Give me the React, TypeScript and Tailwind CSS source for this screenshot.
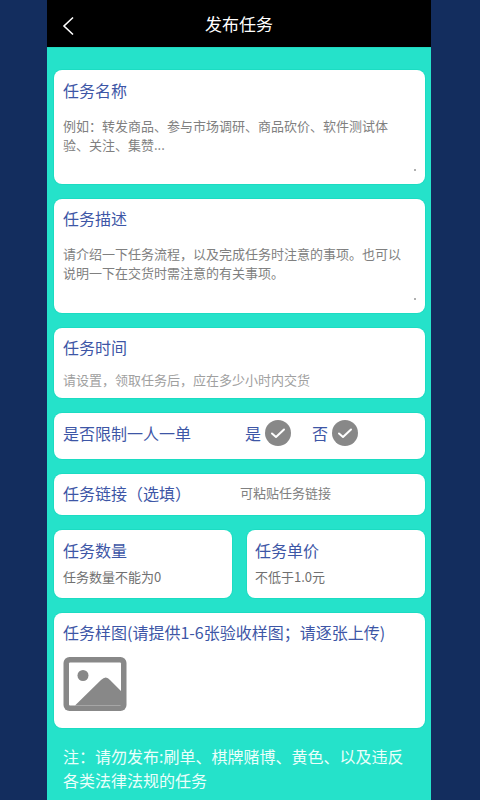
const cjk = "font-['Noto_Sans_CJK_SC','Liberation_Sans',sans-serif]";
const card = "rounded-[8px] bg-white shadow-[0_0_0_1px_#1cdcc2]";

function Label({ children }: { children: React.ReactNode }) {
  return <div className="text-[16px] leading-[24px] text-[#3d56a6]">{children}</div>;
}

function Check() {
  return (
    <span className="flex h-[26px] w-[26px] items-center justify-center rounded-full bg-[#888888]">
      <svg width="16" height="12" viewBox="0 0 16 12" fill="none">
        <path d="M2 6.5 L6 10 L14 2.5" stroke="#fff" strokeWidth="2" strokeLinecap="round" strokeLinejoin="round" />
      </svg>
    </span>
  );
}

function ResizeDot() {
  return <span className="absolute bottom-[13px] right-[9px] h-[2px] w-[2px] bg-[#b0b0b0]" />;
}

export default function App() {
  return (
    <div className={`flex h-[800px] w-[480px] justify-center overflow-hidden bg-[#132d5e] pr-[2px] ${cjk}`}>
      <div className="flex h-full w-[384px] flex-col bg-[#25e2ca]">
        <header className="relative flex h-[48px] shrink-0 items-center justify-center border-b border-[#1fd8c0] bg-black">
          <svg className="absolute left-[15px] top-[16px]" width="14" height="20" viewBox="0 0 14 20" fill="none">
            <path d="M11 1.5 L2 10 L11 18.5" stroke="#fff" strokeWidth="1.6" />
          </svg>
          <h1 className="text-[17px] font-normal text-white">发布任务</h1>
        </header>

        <main className="flex flex-col gap-[15px] px-[7px] pt-[22px] pr-[6px]">
          <section className={`relative h-[114px] px-[9px] pt-[8px] ${card}`}>
            <Label>任务名称</Label>
            <p className="mt-[14px] w-[330px] text-[13px] leading-[19px] text-[#808080]">
              例如：转发商品、参与市场调研、商品砍价、软件测试体验、关注、集赞...
            </p>
            <ResizeDot />
          </section>

          <section className={`relative h-[114px] px-[9px] pt-[7px] ${card}`}>
            <Label>任务描述</Label>
            <p className="mt-[14px] w-[345px] text-[13px] leading-[19px] text-[#808080]">
              请介绍一下任务流程，以及完成任务时注意的事项。也可以说明一下在交货时需注意的有关事项。
            </p>
            <ResizeDot />
          </section>

          <section className={`h-[70px] px-[9px] pt-[7px] ${card}`}>
            <Label>任务时间</Label>
            <p className="mt-[11px] text-[13px] leading-[19px] text-[#a0a0a0]">请设置，领取任务后，应在多少小时内交货</p>
          </section>

          <section className={`flex h-[46px] items-center px-[9px] pb-[6px] ${card}`}>
            <div className="w-[182px]">
              <Label>是否限制一人一单</Label>
            </div>
            <Label>是</Label>
            <span className="ml-[4px]">
              <Check />
            </span>
            <span className="ml-[21px]">
              <Label>否</Label>
            </span>
            <span className="ml-[4px]">
              <Check />
            </span>
          </section>

          <section className={`flex h-[41px] items-center px-[9px] pb-[4px] ${card}`}>
            <div className="w-[177px]">
              <Label>任务链接（选填）</Label>
            </div>
            <span className="text-[13px] text-[#808080]">可粘贴任务链接</span>
          </section>

          <div className="grid grid-cols-2 gap-[15px]">
            <section className={`h-[68px] px-[9px] pt-[8px] ${card}`}>
              <Label>任务数量</Label>
              <p className="mt-[6px] text-[13px] leading-[18px] text-[#707070]">任务数量不能为0</p>
            </section>
            <section className={`h-[68px] px-[8px] pt-[8px] ${card}`}>
              <Label>任务单价</Label>
              <p className="mt-[6px] text-[13px] leading-[18px] text-[#707070]">不低于1.0元</p>
            </section>
          </div>

          <section className={`h-[115px] px-[9px] pt-[7px] ${card}`}>
            <Label>任务样图(请提供1-6张验收样图；请逐张上传)</Label>
            <svg className="mt-[13px]" width="64" height="54" viewBox="0 0 64 54">
              <rect x="0.5" y="0" width="63" height="54" rx="6" fill="#888888" />
              <rect x="6" y="5.5" width="52" height="43" rx="1" fill="#fff" />
              <circle cx="20" cy="18.5" r="5.5" fill="#888888" />
              <path d="M12 48.5 L38 23 Q43 18 47 23 L58 34 L58 48.5 Z" fill="#888888" />
            </svg>
          </section>

          <p className="mt-[1px] px-[9px] text-[16px] leading-[24px] text-[#eafffb]">
            注：请勿发布:刷单、棋牌赌博、黄色、以及违反各类法律法规的任务
          </p>
        </main>
      </div>
    </div>
  );
}
